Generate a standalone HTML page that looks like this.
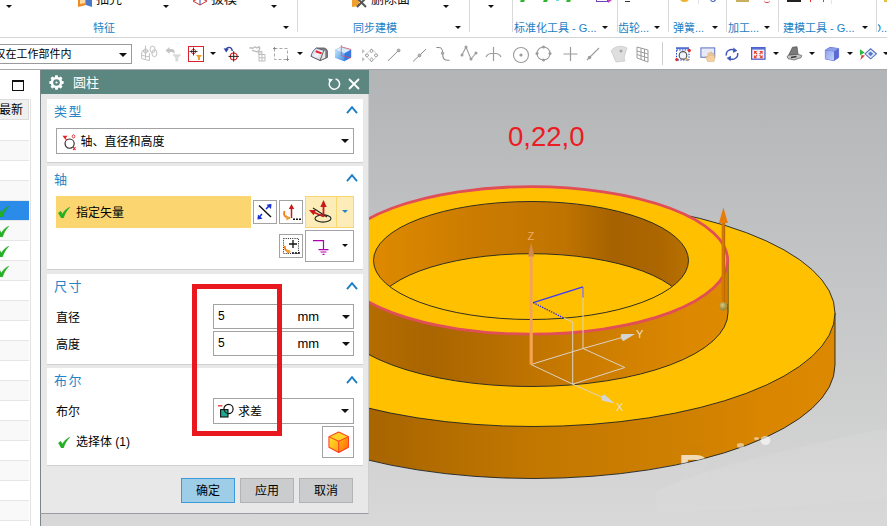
<!DOCTYPE html>
<html lang="zh-CN">
<head>
<meta charset="utf-8">
<title>圆柱</title>
<style>
html,body{margin:0;padding:0;}
body{width:887px;height:526px;overflow:hidden;position:relative;background:#fff;
  font-family:"Liberation Sans","Noto Sans CJK SC",sans-serif;font-size:12px;color:#000;}
.abs{position:absolute;}
#viewport{position:absolute;left:0;top:69px;width:887px;height:457px;
  background:linear-gradient(#b3b4b6 0%,#c4c5c6 45%,#d8d8d8 100%);}
#scene{position:absolute;left:0;top:0;}
/* ribbon */
#ribbon{position:absolute;left:0;top:0;width:887px;height:37px;background:#fff;border-bottom:1px solid #d4d4d4;}
#ribbon .grp{position:absolute;top:20.5px;font-size:11px;color:#1c7ec4;white-space:nowrap;line-height:15px;}
#ribbon .sep{position:absolute;top:0;width:1px;height:32px;background:#d9d9d9;}
.tri.big{border-left-width:4px;border-right-width:4px;border-top-width:4.5px}
.tri{position:absolute;width:0;height:0;border-left:3px solid transparent;border-right:3px solid transparent;border-top:3.3px solid #111;}
#ribbon .cut{position:absolute;top:-9px;font-size:13px;color:#111;white-space:nowrap;line-height:15px;}
/* toolbar */
#toolbar{position:absolute;left:0;top:38px;width:887px;height:31px;background:#fff;}
#filter{position:absolute;left:-8px;top:6px;width:138px;height:18px;border:1px solid #9a9a9a;background:#fff;font-size:11px;line-height:18px;white-space:nowrap;}
/* left panel */
#left{overflow:hidden;position:absolute;left:0;top:69px;width:41px;height:457px;background:#fff;box-sizing:border-box;}
#left .row{position:absolute;left:0;width:29px;height:19px;border-bottom:1px solid #e6e6e6;}
/* dialog */
#dlg{position:absolute;left:40px;top:69px;width:329px;height:445px;background:#e8e8e8;border-left:1px solid #7c848a;border-bottom:1px solid #9a9ea2;border-right:1px solid #cfcfcf;box-sizing:border-box;}
#dlg .title{position:absolute;left:0;top:0;width:328px;height:25px;background:#5b8780;color:#fff;}
.panel{position:absolute;left:6px;width:316px;background:#fff;border-bottom:1px solid #d0d0d0;}
.hd{position:absolute;left:7px;font-size:13px;letter-spacing:1.5px;color:#2484c6;line-height:16px;white-space:nowrap;}
.lb{position:absolute;font-size:12px;line-height:15px;white-space:nowrap;color:#000;}
.box{position:absolute;box-sizing:border-box;border:1px solid #a3a3a3;background:#fff;}
.btn{position:absolute;box-sizing:border-box;border:1px solid #b2b3b5;background:#cbccce;font-size:12px;line-height:25px;text-align:center;}
</style>
</head>
<body>

<div id="viewport">
<div class="abs" style="left:0;top:0;width:887px;height:1px;background:#a6a7a9;z-index:1"></div>
<svg id="scene" width="887" height="457" viewBox="0 69 887 457">
<defs>
  <linearGradient id="gOuter" x1="231" x2="835" y1="0" y2="0" gradientUnits="userSpaceOnUse">
    <stop offset="0" stop-color="#9a5c00"/>
    <stop offset="0.25" stop-color="#a96600"/>
    <stop offset="0.5" stop-color="#c27700"/>
    <stop offset="0.72" stop-color="#cd7f00"/>
    <stop offset="0.9" stop-color="#da8600"/>
    <stop offset="1" stop-color="#dc8800"/>
  </linearGradient>
  <linearGradient id="gRing" x1="334" x2="728" y1="0" y2="0" gradientUnits="userSpaceOnUse">
    <stop offset="0" stop-color="#c07400"/>
    <stop offset="0.1" stop-color="#b46c00"/>
    <stop offset="0.24" stop-color="#a96500"/>
    <stop offset="0.36" stop-color="#b26b00"/>
    <stop offset="0.6" stop-color="#c87a00"/>
    <stop offset="0.9" stop-color="#dc8800"/>
    <stop offset="1" stop-color="#de8a00"/>
  </linearGradient>
  <linearGradient id="gHole" x1="373" x2="689" y1="0" y2="0" gradientUnits="userSpaceOnUse">
    <stop offset="0" stop-color="#de8a00"/>
    <stop offset="0.3" stop-color="#cc7c00"/>
    <stop offset="0.6" stop-color="#c07400"/>
    <stop offset="0.76" stop-color="#a66200"/>
    <stop offset="0.9" stop-color="#ac6600"/>
    <stop offset="1" stop-color="#b87000"/>
  </linearGradient>
</defs>
<!-- outer disc side -->
<path d="M231,313 L231,365 A302,113.5 0 0 0 835,365 L835,313 Z" fill="url(#gOuter)" stroke="#1e2226" stroke-width="0.9"/>
<!-- outer disc top -->
<ellipse cx="533" cy="313" rx="302" ry="113.5" fill="#ffc000" stroke="#1e2226" stroke-width="0.9"/>
<!-- ring side -->
<path d="M334,260.4 L334,312.6 A197,73.9 0 0 0 728,312.6 L728,260.4 Z" fill="url(#gRing)" stroke="#1e2226" stroke-width="0.9"/>
<path d="M726.4,262 V304" stroke="#d67c00" stroke-width="2.8"/>
<!-- ring top -->
<ellipse cx="531" cy="260.4" rx="196.7" ry="73.8" fill="#ffc000" stroke="#e04e58" stroke-width="2.8"/>
<!-- hole -->
<clipPath id="cHole"><ellipse cx="531" cy="260.5" rx="157.5" ry="59"/></clipPath>
<ellipse cx="531" cy="260.5" rx="157.5" ry="59" fill="url(#gHole)"/>
<ellipse cx="531" cy="312.7" rx="157.5" ry="59" fill="#ffc000" stroke="#1e2226" stroke-width="0.9" clip-path="url(#cHole)"/>
<ellipse cx="531" cy="260.5" rx="157.5" ry="59" fill="none" stroke="#1e2226" stroke-width="0.9"/>

<!-- WCS cube -->
<g fill="none" stroke="#dcd2c4" stroke-width="1">
<path d="M531,364.5 L572.7,384.2 L624.8,367.5 L583,348.5 Z"/>
<path d="M572.7,384.2 V322 L564,318.2"/>
<path d="M583,348.5 V287.7"/>
<path d="M572.7,384.2 L606,399"/>
<path d="M583,348.5 L622,337.5"/>
</g>
<path d="M533.2,302.6 L583,286.9" stroke="#3838ff" stroke-width="1.2" fill="none"/><path d="M583,286.9 V297.5" stroke="#6a5cf0" stroke-width="1.1" fill="none"/>
<path d="M533.2,302.6 L564,318.2" stroke="#2020ff" stroke-width="1.3" stroke-dasharray="1.4 1.1" fill="none"/>
<!-- X arrow -->
<path d="M604.5,394.5 L614.5,403.5 L602,400.5 C600.5,398 602,395 604.5,394.5Z" fill="#d4d4d4"/>
<text x="616" y="411" font-size="11" fill="#e8e0d0" font-family="Liberation Sans, sans-serif">X</text>
<!-- Y arrow -->
<path d="M621.5,334 L635,334 L623.5,341 C621,340 620,336 621.5,334Z" fill="#d4d4d4"/>
<text x="636" y="338" font-size="11" fill="#e8e0d0" font-family="Liberation Sans, sans-serif">Y</text>
<!-- Z axis -->
<path d="M531.2,364.5 V333" stroke="#f7a24c" stroke-width="3.2"/>
<path d="M531.2,333 V255" stroke="#f2a25a" stroke-width="2.7"/>
<path d="M528,256.6 L531.2,242.6 L534.4,256.6Z" fill="#d08a50"/>
<text x="527.5" y="240" font-size="11" fill="#f0a868" font-family="Liberation Sans, sans-serif">Z</text>
<!-- vector arrow -->
<path d="M723.3,305 V222" stroke="#d27800" stroke-width="3.4"/>
<path d="M724.7,305 V222" stroke="#b86600" stroke-width="0.9"/>
<path d="M718.9,223 L723.4,207.6 L727.9,223Z" fill="#e87c08"/>
<radialGradient id="gBall" cx="0.42" cy="0.36" r="0.7"><stop offset="0" stop-color="#dccc80"/><stop offset="0.45" stop-color="#b4a050"/><stop offset="1" stop-color="#8c7c34"/></radialGradient>
<circle cx="723.2" cy="306.3" r="4.2" fill="url(#gBall)"/>
<!-- coordinate text -->
<text x="508" y="145.8" font-size="27.5" fill="#ea1c24" font-family="Liberation Sans, sans-serif">0,22,0</text>
<!-- watermark hints -->
<clipPath id="cSide"><path d="M231,313 L231,365 A302,113.5 0 0 0 835,365 L835,313 Z"/></clipPath>
<text x="678.5" y="485.7" font-size="44" font-weight="bold" fill="#fff" opacity="0.7" clip-path="url(#cSide)" font-family="Liberation Sans, sans-serif">B</text>
<text x="678.5" y="485.7" font-size="44" font-weight="bold" fill="#fff" opacity="0.04" font-family="Liberation Sans, sans-serif">B</text>
<g fill="#ffffff">
<ellipse cx="740.5" cy="445.5" rx="3.6" ry="2.4" opacity="0.5"/>
<ellipse cx="756.5" cy="438.5" rx="2.6" ry="1.6" opacity="0.5"/>
<ellipse cx="765.5" cy="440.5" rx="5" ry="4.6" opacity="0.6"/>
<path d="M655,492 C700,470 760,455 887,428 V500 C800,505 720,512 657,512Z" opacity="0.07"/>
</g>
</svg>
</div>

<div id="ribbon">
<!-- cut-off top row -->
<div class="tri" style="left:6px;top:5px"></div>
<svg class="abs" style="left:77px;top:-8px" width="16" height="16" viewBox="0 0 16 16"><path d="M1,3 L9,1 L9,13 L1,15Z" fill="#f08a24"/><path d="M9,1 L15,3 L15,15 L9,13Z" fill="#4a78c8"/><path d="M3,5 L8,4 L8,11 L3,12Z" fill="#ffd9a0"/></svg>
<div class="cut" style="left:96px">抽壳</div>
<div class="tri" style="left:163px;top:5px"></div>
<svg class="abs" style="left:192px;top:-10px" width="16" height="16" viewBox="0 0 16 16"><path d="M1,11 L8,8 L15,11 L8,15Z" fill="none" stroke="#d03030" stroke-width="1"/><path d="M8,2 L8,15" stroke="#3050c0" stroke-width="1"/></svg>
<div class="cut" style="left:211px">拔模</div>
<div class="tri" style="left:271px;top:5px"></div>
<div class="sep" style="left:297px"></div>
<svg class="abs" style="left:351px;top:-8px" width="17" height="16" viewBox="0 0 17 16"><path d="M1,4 L8,2 L8,14 L1,15Z" fill="#f0a030"/><path d="M6,6 L15,15 M15,6 L6,15" stroke="#555" stroke-width="2"/></svg>
<div class="cut" style="left:371px">删除面</div>
<div class="tri" style="left:443px;top:5px"></div>
<div class="sep" style="left:469px"></div>
<div class="tri" style="left:488px;top:5px"></div>
<div class="sep" style="left:512px"></div>
<div class="abs" style="left:521px;top:-3px;width:4px;height:5px;background:#2fb52f;transform:skewX(-20deg)"></div>
<div class="abs" style="left:544px;top:-3px;width:4px;height:5px;background:#2fb52f;transform:skewX(-20deg)"></div>
<div class="abs" style="left:556px;top:-3px;width:3px;height:4px;background:#6fd8d8"></div>
<div class="abs" style="left:567px;top:-3px;width:4px;height:5px;background:#2fb52f;transform:skewX(-20deg)"></div>
<div class="abs" style="left:596px;top:-2px;width:12px;height:4px;border:1.5px solid #7040c0;border-top:0;box-sizing:border-box"></div>
<div class="abs" style="left:608px;top:0;width:0;height:0;border-left:4px solid #c040c0;border-top:3px solid transparent;border-bottom:3px solid transparent;margin-top:-3px"></div>
<div class="sep" style="left:617px"></div>
<div class="abs" style="left:625px;top:1px;width:5px;height:1px;background:#333"></div>
<div class="sep" style="left:668px"></div>
<div class="abs" style="left:680px;top:-2px;width:9px;height:4px;background:#f0b030;border-radius:0 0 4px 4px"></div>
<div class="sep" style="left:698px;background:#e4e4e4;height:4px"></div>
<div class="abs" style="left:710px;top:-2px;width:6px;height:4px;border:1px solid #4060c0;border-top:0;border-radius:0 0 4px 4px;box-sizing:border-box"></div>
<div class="sep" style="left:726px"></div>
<div class="abs" style="left:736px;top:0;width:13px;height:2px;background:#c8b060"></div>
<div class="abs" style="left:764px;top:0;width:6px;height:3px;border-bottom:1.5px solid #e03030;border-radius:0 0 5px 5px;box-sizing:border-box"></div>
<div class="sep" style="left:778px"></div>
<div class="abs" style="left:787px;top:0;width:14px;height:2px;background:#222"></div>
<div class="abs" style="left:810px;top:0;width:1px;height:2px;background:#e03030"></div>
<div class="abs" style="left:823px;top:0;width:1px;height:2px;background:#e03030"></div>
<div class="sep" style="left:831px;background:#e4e4e4;height:4px"></div>
<div class="abs" style="left:840px;top:-7px;font-size:8px;line-height:9px;color:#333">mm</div>
<div class="sep" style="left:876px"></div>
<div class="abs" style="left:884px;top:0;width:3px;height:2px;background:#e8c040"></div>
<!-- group labels -->
<div class="grp" style="left:93px">特征</div>
<div class="tri" style="left:283.3px;top:26px"></div>
<div class="grp" style="left:353px">同步建模</div>
<div class="tri" style="left:455.3px;top:26px"></div>
<div class="grp" style="left:514px">标准化工具 - G...</div>
<div class="tri" style="left:602.3px;top:26px"></div>
<div class="grp" style="left:618px">齿轮...</div>
<div class="tri" style="left:654.3px;top:26px"></div>
<div class="grp" style="left:673px">弹簧...</div>
<div class="tri" style="left:712.3px;top:26px"></div>
<div class="grp" style="left:728px">加工...</div>
<div class="tri" style="left:764.3px;top:26px"></div>
<div class="grp" style="left:783px">建模工具 - G...</div>
<div class="tri" style="left:862.3px;top:26px"></div>
<div class="grp" style="left:877.5px;width:10px;overflow:hidden"><span style="margin-left:-4.5px">D...</span></div>
</div>
<div id="toolbar">
<div id="filter"><span style="position:absolute;left:1.5px;top:0">仅在工作部件内</span><div class="tri" style="left:126px;top:8px;border-left-width:4px;border-right-width:4px;border-top-width:4.5px"></div></div>
<!-- 1 grey part/assembly -->
<svg class="abs" style="left:140px;top:7px" width="18" height="17" viewBox="140 45 18 17" fill="none" stroke="#c2c2c2" stroke-width="1"><path d="M145.5,45.5 V55 M141.5,51 H149"/><circle cx="145.5" cy="51" r="2.1"/><path d="M141.7,52 V58.6 L149.4,60.6 V53.2 M141.7,55.2 L149.4,57 M145.5,55 V59.6"/><ellipse cx="152.6" cy="49.4" rx="2.5" ry="3.3"/><ellipse cx="154.4" cy="53.2" rx="2.5" ry="3.5"/></svg>
<!-- 2 grey arrow funnel -->
<svg class="abs" style="left:164px;top:7px" width="18" height="17" viewBox="164 45 18 17" fill="none"><path d="M165.5,50.5 L169.5,47 V49.2 C173,48.5 175.5,50 174.5,54 C174,52.3 172,51.8 169.5,52 V54Z" fill="#c4c4c4"/><path d="M173,54.8 H180.6 L177.8,57.8 V61 H175.8 V57.8Z" fill="#dcdcdc" stroke="#cfcfcf" stroke-width="0.6"/></svg>
<!-- 3 red bordered -->
<svg class="abs" style="left:188px;top:8px" width="16" height="16" viewBox="0 0 16 16" fill="none"><rect x="0.5" y="0.5" width="15" height="15" stroke="#d8232a" fill="#fff"/><circle cx="5.5" cy="5.5" r="2.2" stroke="#c03030" stroke-width="0.9"/><path d="M5.5,1.5 V9.5 M1.5,5.5 H9.5" stroke="#222" stroke-width="0.9"/><path d="M8,9 H14 L12,11.5 V14 H10 V11.5Z" fill="#f0a020"/></svg>
<div class="tri" style="left:210px;top:14px"></div>
<!-- 5 undo crosshair -->
<svg class="abs" style="left:223px;top:7px" width="17" height="18" viewBox="223 45 17 18" fill="none"><path d="M226,50.5 C226.5,46.5 231.5,46 232.3,51" stroke="#3344a8" stroke-width="1.4"/><path d="M223.6,48.2 L226.2,52.4 L228.8,48.8Z" fill="#3344a8"/><circle cx="233.7" cy="56.4" r="3.4" stroke="#e02020" stroke-width="1.1"/><path d="M233.7,51.2 V61.6 M228.5,56.4 H238.9" stroke="#222" stroke-width="1"/></svg>
<!-- 6 grey -->
<svg class="abs" style="left:248px;top:7px" width="19" height="17" viewBox="248 45 19 17" fill="none" stroke="#bebebe" stroke-width="1"><path d="M249.5,48.5 C251,46 252.5,50 254,47.5 C255.5,45.5 256.5,49.5 258.5,47 C260,46 260.5,50 258,51.5 C256,52.5 254,50 252,50.5" stroke-width="1.4"/><rect x="258.7" y="51.4" width="3.2" height="3" fill="#e4e4e4"/><path d="M259,54.5 H265 V61 H259Z M262,54.5 V61 M259,57.8 H265"/></svg>
<!-- 7 dashed rect -->
<svg class="abs" style="left:273px;top:8px" width="18" height="16" viewBox="0 0 18 16" fill="none" stroke="#a9a9a9" stroke-width="1"><rect x="1.5" y="2.5" width="13" height="11" stroke-dasharray="3 2"/><path d="M1.5,1 V4 M0,2.5 H3 M14.5,12 V15 M13,13.5 H16" stroke="#8a8a8a"/></svg>
<div class="tri" style="left:296.8px;top:14px"></div>
<!-- 9 eraser-like -->
<svg class="abs" style="left:310px;top:7px" width="19" height="17" viewBox="310 45 19 17" fill="none"><defs><linearGradient id="er1" x1="0" y1="0" x2="1" y2="1"><stop offset="0" stop-color="#b8c4e4"/><stop offset="0.5" stop-color="#f4f4f8"/><stop offset="1" stop-color="#c8c8cc"/></linearGradient></defs><path d="M316.4,48 L324,48 C326.5,48.3 327.4,50 327.4,52 V57.5 L320.2,60.5 L311,56.2 Z" fill="#8a8a8a" stroke="#4a4a4a" stroke-width="0.8"/><path d="M316.4,48 L323.9,50.5 L320.2,60.5 L311,56.2 C312,52 314,49.5 316.4,48Z" fill="url(#er1)" stroke="#4a5070" stroke-width="0.8"/><path d="M323.9,50.5 L325.8,49.6 V58 L320.2,60.5Z" fill="#e8e8e8" stroke="#4a4a4a" stroke-width="0.6"/><path d="M315.8,51.2 L321.6,53.4" stroke="#e82028" stroke-width="2"/></svg>
<!-- 10 blue cube -->
<svg class="abs" style="left:334px;top:6px" width="19" height="18" viewBox="334 44 19 18"><defs><linearGradient id="bc1" x1="0" y1="0" x2="1" y2="1"><stop offset="0" stop-color="#c4e6fc"/><stop offset="1" stop-color="#3c8ee6"/></linearGradient></defs><path d="M335,50 L341.5,46.5 L351.2,49.5 V57.5 L344.5,61.3 L335,57.5Z" fill="#3a78e0"/><path d="M335,50 L344.5,53.2 V61.3 L335,57.5Z" fill="url(#bc1)"/><path d="M335,50 L341.5,46.5 L351.2,49.5 L344.5,53.2Z" fill="#d4ecfc"/><path d="M341.3,45 V55.6 L351,58 M341.3,47 L351.2,49.5" stroke="#e84848" stroke-width="0.7" fill="none"/></svg>
<!-- 11 diamond pattern -->
<svg class="abs" style="left:361px;top:8px" width="18" height="17" viewBox="361 46 18 17" fill="none" stroke="#b0b0b0" stroke-width="0.9"><path d="M371.5,49 L378,55.3 L371.5,61.8 L365,55.3Z" stroke="#c4c4c4"/><path d="M371.5,49 L373,51 L371.5,53 L370,51Z M371.5,57.6 L373,59.6 L371.5,61.8 L370,59.6Z M365,55.3 L367,53.8 L369,55.3 L367,56.8Z M374,55.3 L376,53.8 L378,55.3 L376,56.8Z" stroke="#9a9a9a"/><path d="M362,49 L365,51.3 L362,53.6Z M362,57 L365,59.3 L362,61.6Z" fill="#c0c0c0" stroke="none"/></svg>
<!-- 12 line endpoint -->
<svg class="abs" style="left:386px;top:8px" width="16" height="17" viewBox="386 46 16 17" fill="none" stroke="#8c8c8c" stroke-width="1"><path d="M388,60.8 L398,51"/><circle cx="398.6" cy="50.4" r="1.5" fill="#b0b0b0" stroke="#8c8c8c" stroke-width="0.6"/></svg>
<!-- 13 line midpoint -->
<svg class="abs" style="left:411px;top:8px" width="17" height="17" viewBox="411 46 17 17" fill="none" stroke="#8c8c8c" stroke-width="1"><path d="M413,61.5 L426,49.2"/><circle cx="419.5" cy="55.4" r="1.5" fill="#b0b0b0" stroke="#8c8c8c" stroke-width="0.6"/></svg>
<!-- 14 curve -->
<svg class="abs" style="left:435px;top:8px" width="16" height="17" viewBox="435 46 16 17" fill="none" stroke="#8c8c8c" stroke-width="1.1"><path d="M436.4,47.5 H438.5 C443,47.5 442.5,51 442.6,53.5 C442.8,57 443,60.3 447.5,60.3 H449.5"/><circle cx="442.6" cy="53.2" r="1.3" fill="#b0b0b0" stroke="#8c8c8c" stroke-width="0.6"/></svg>
<!-- 15 polyline nodes -->
<svg class="abs" style="left:460px;top:7px" width="18" height="17" viewBox="0 0 18 17" fill="none" stroke="#9c9c9c" stroke-width="1.1"><path d="M2,10 L6,2 L11,14 L16,8"/><circle cx="6" cy="2" r="1.5" fill="#9c9c9c" stroke="none"/><circle cx="2" cy="10" r="1.5" fill="#9c9c9c" stroke="none"/><circle cx="11" cy="14" r="1.5" fill="#9c9c9c" stroke="none"/><circle cx="16" cy="8" r="1.5" fill="#9c9c9c" stroke="none"/></svg>
<!-- 16 arc with vertical -->
<svg class="abs" style="left:485px;top:8px" width="17" height="16" viewBox="0 0 17 16" fill="none" stroke="#9c9c9c" stroke-width="1.2"><path d="M8.5,1 V15 M1,11 C3,6 14,6 16,11"/></svg>
<!-- 17 circle center -->
<svg class="abs" style="left:511.5px;top:7.5px" width="18" height="18" viewBox="0 0 18 18" fill="none" stroke="#9c9c9c" stroke-width="1.1"><circle cx="9" cy="9" r="7.5"/><circle cx="9" cy="9" r="1.6" fill="#9c9c9c" stroke="none"/></svg>
<!-- 18 circle quadrant -->
<svg class="abs" style="left:535px;top:7px" width="17" height="17" viewBox="0 0 17 17" fill="none" stroke="#9c9c9c" stroke-width="1.1"><circle cx="8.5" cy="8.5" r="6.5"/><g fill="#9c9c9c" stroke="none"><circle cx="8.5" cy="2" r="1.5"/><circle cx="8.5" cy="15" r="1.5"/><circle cx="2" cy="8.5" r="1.5"/><circle cx="15" cy="8.5" r="1.5"/></g></svg>
<!-- 19 plus -->
<svg class="abs" style="left:563px;top:9px" width="15" height="15" viewBox="0 0 15 15" fill="none" stroke="#9c9c9c" stroke-width="1.2"><path d="M7.5,0 V14 M0.5,7 H14.5"/></svg>
<!-- 20 line with point -->
<svg class="abs" style="left:585px;top:8px" width="16" height="16" viewBox="0 0 16 16" fill="none" stroke="#9c9c9c" stroke-width="1.1"><path d="M2,14 L14,2"/><circle cx="4.5" cy="11.5" r="1.7" fill="#9c9c9c" stroke="none"/></svg>
<!-- 21 surface -->
<svg class="abs" style="left:610px;top:7px" width="18" height="18" viewBox="0 0 18 18" fill="none"><path d="M1,6 C4,1 12,0 17,3 L15,9 C14,12 14,14 15,16 L6,17 C4,13 3,9 1,6Z" fill="#dedede" stroke="#cacaca" stroke-width="0.8"/><circle cx="11" cy="6" r="1.5" fill="#a4a4a4"/></svg>
<!-- 22 grid -->
<svg class="abs" style="left:636px;top:8px" width="14" height="17" viewBox="0 0 14 17" fill="none" stroke="#9c9c9c" stroke-width="1"><path d="M1,1 L12,4 V16 L1,12Z M5,2 V13.5 M8.5,3 V15 M1,5 L12,8 M1,8.5 L12,12"/></svg>
<div class="abs" style="left:662px;top:4px;width:1px;height:23px;background:#cfcfcf"></div>
<!-- zoom -->
<svg class="abs" style="left:675px;top:9px" width="17" height="16" viewBox="0 0 17 16" fill="none"><path d="M1,1.2 H14" stroke="#5070d0" stroke-width="2"/><rect x="1.5" y="3" width="12.5" height="10" stroke="#2040d0" stroke-dasharray="1.5 1.2" stroke-width="1"/><circle cx="8" cy="8.4" r="3.8" stroke="#555" stroke-width="1.2" fill="#f0f4ff"/><path d="M10.8,11.2 L13.4,13.8" stroke="#c8a050" stroke-width="1.8"/><circle cx="14.3" cy="3.4" r="1.6" fill="#e03030"/><circle cx="1.8" cy="12.6" r="1.6" fill="#e03030"/></svg>
<!-- pan -->
<svg class="abs" style="left:700px;top:9px" width="17" height="16" viewBox="0 0 17 16" fill="none"><rect x="0.9" y="0.9" width="13.8" height="9.4" fill="#e6eaf6" stroke="#6a7cc8" stroke-width="1.1"/><path d="M7.6,14.6 C6.6,12 5.4,10 6.6,9 L8,10 V6 H9.3 V8.5 H10.2 V5 H11.6 V8.5 H12.4 V6 H13.7 V9 L14.6,8 V12 C14.6,13.5 14.2,14 13.8,14.6Z" fill="#f4d0a0" stroke="#d0a870" stroke-width="0.5"/></svg>
<!-- rotate -->
<svg class="abs" style="left:724px;top:9px" width="16" height="15" viewBox="0 0 16 15" fill="none" stroke="#4058b8" stroke-width="1.4"><path d="M2.3,8.6 C1.6,4 6,1.4 10.6,3"/><path d="M13.7,6 C14.4,10.6 10,13.4 5.4,11.8"/><path d="M9.4,0.6 L13.4,3.8 L9,6Z M6.6,14.2 L2.6,11 L7,8.8Z" fill="#4058b8" stroke="none"/></svg>
<!-- fit -->
<svg class="abs" style="left:751px;top:9px" width="15" height="13" viewBox="0 0 15 13" fill="none"><rect x="0.6" y="0.6" width="13.4" height="11.6" fill="#ececf8" stroke="#4858d0" stroke-width="1.2"/><path d="M0.6,1.6 H14" stroke="#5870d0" stroke-width="2"/><path d="M3,4 H6.2 L5,5.2 L6.4,6.6 L5.6,7.4 L4.2,6 L3,7.2Z M11.6,4 H8.4 L9.6,5.2 L8.2,6.6 L9,7.4 L10.4,6 L11.6,7.2Z M3,11.2 H6.2 L5,10 L6.4,8.6 L5.6,7.8 L4.2,9.2 L3,8Z M11.6,11.2 H8.4 L9.6,10 L8.2,8.6 L9,7.8 L10.4,9.2 L11.6,8Z" fill="#f04028"/></svg>
<div class="tri" style="left:773px;top:14px"></div>
<!-- grey 3d -->
<svg class="abs" style="left:786px;top:8px" width="17" height="15" viewBox="786 46 17 15" fill="none"><path d="M792.5,47.2 L797,46.8 L798,54.5 L788.5,55.5 Z" fill="#7a7a7a" stroke="#4c4c4c" stroke-width="0.7"/><path d="M787,56.5 L788.5,55.2 L798,54.2 L801.8,55.6 L801,57.6 L794,60 L788,58.6Z" fill="#c4c4c4" stroke="#555" stroke-width="0.7"/><path d="M791,57.4 L796.5,56.6" stroke="#333" stroke-width="1.5"/></svg>
<div class="tri" style="left:809.4px;top:14px"></div>
<!-- blue cube -->
<svg class="abs" style="left:824px;top:8px" width="16" height="16" viewBox="824 46 16 16"><defs><linearGradient id="bc2" x1="0" y1="0" x2="1" y2="1"><stop offset="0" stop-color="#8fa4ee"/><stop offset="1" stop-color="#c4d0f8"/></linearGradient></defs><path d="M825.4,50 L830,47.4 L838.6,48.6 V57.6 L834,60.6 L825.4,59Z" fill="#5a6ad0" stroke="#5868d4" stroke-width="0.9" stroke-linejoin="round"/><path d="M825.4,50.2 L834,51.4 V60.6 L825.4,59Z" fill="url(#bc2)"/><path d="M825.4,50 L830,47.4 L838.6,48.6 L834,51.4Z" fill="#8c9ce8"/></svg>
<div class="tri" style="left:847.4px;top:14px"></div>
<!-- colored -->
<svg class="abs" style="left:859px;top:8px" width="18" height="15" viewBox="859 46 18 15"><path d="M860,49.3 L864.6,52.6 L860,55.6Z" fill="#30b840"/><path d="M860.4,60 L865,55.6 L861.6,55Z" fill="#d84040"/><path d="M865,53.8 L870.6,48.8 L876.4,53.8 L870.6,58.8Z" fill="#e8ecf8" stroke="#5070c0" stroke-width="1.1"/><path d="M868,53.8 L870.6,51.4 L873.2,53.8 L870.6,56.2Z" fill="#5878c8"/></svg>
<div class="tri" style="left:883px;top:14px"></div>
</div>
<div id="left">
<div class="abs" style="left:0;top:0;width:40px;height:1px;background:#b9b9b9"></div>
<div class="abs" style="left:30px;top:30px;width:1px;height:430px;background:#e2e2e2"></div>
<div class="abs" style="left:40px;top:0;width:1px;height:457px;background:#7c848a"></div>
<div class="abs" style="left:12px;top:11px;width:12px;height:11px;box-sizing:border-box;border:1px solid #111;border-top-width:2.5px"></div>
<div class="abs" style="left:0;top:30px;width:29px;height:21px;box-sizing:border-box;background:#f0f0f0;border:1px solid #dcdcdc;border-left:0;font-size:12px;line-height:20px;white-space:nowrap"><span style="position:absolute;left:-1px;top:0">最新</span></div>
<div class="row" style="top:52px;background:#fff"></div><div class="row" style="top:72px;background:#f9f9f9"></div><div class="row" style="top:92px;background:#fff"></div><div class="row" style="top:112px;background:#f9f9f9"></div><div class="row" style="top:132px;background:#2b8be8"></div><div class="row" style="top:152px;background:#f9f9f9"></div><div class="row" style="top:172px;background:#fff"></div><div class="row" style="top:192px;background:#f9f9f9"></div><div class="row" style="top:212px;background:#fff"></div><div class="row" style="top:232px;background:#f9f9f9"></div><div class="row" style="top:252px;background:#fff"></div><div class="row" style="top:272px;background:#f9f9f9"></div><div class="row" style="top:292px;background:#fff"></div><div class="row" style="top:312px;background:#f9f9f9"></div><div class="row" style="top:332px;background:#fff"></div><div class="row" style="top:352px;background:#f9f9f9"></div><div class="row" style="top:372px;background:#fff"></div><div class="row" style="top:392px;background:#f9f9f9"></div><div class="row" style="top:412px;background:#fff"></div><div class="row" style="top:432px;background:#f9f9f9"></div><div class="row" style="top:452px;background:#fff"></div>
<svg class="abs" style="left:-3.4px;top:136.5px" width="12.2" height="11.4" viewBox="0 0 14 12" preserveAspectRatio="none"><path d="M0.5,6.2 L3.2,4.6 L5,7.6 C7,4 10,1.5 13.6,0.2 C10,3.6 7.6,7.4 6.2,11.6 L4,11.8 Z" fill="#22b322" stroke="#1a9c1a" stroke-width="0.5"/></svg><svg class="abs" style="left:-3.4px;top:156.5px" width="12.2" height="11.4" viewBox="0 0 14 12" preserveAspectRatio="none"><path d="M0.5,6.2 L3.2,4.6 L5,7.6 C7,4 10,1.5 13.6,0.2 C10,3.6 7.6,7.4 6.2,11.6 L4,11.8 Z" fill="#22b322" stroke="#1a9c1a" stroke-width="0.5"/></svg><svg class="abs" style="left:-3.4px;top:176.5px" width="12.2" height="11.4" viewBox="0 0 14 12" preserveAspectRatio="none"><path d="M0.5,6.2 L3.2,4.6 L5,7.6 C7,4 10,1.5 13.6,0.2 C10,3.6 7.6,7.4 6.2,11.6 L4,11.8 Z" fill="#22b322" stroke="#1a9c1a" stroke-width="0.5"/></svg><svg class="abs" style="left:-3.4px;top:196.5px" width="12.2" height="11.4" viewBox="0 0 14 12" preserveAspectRatio="none"><path d="M0.5,6.2 L3.2,4.6 L5,7.6 C7,4 10,1.5 13.6,0.2 C10,3.6 7.6,7.4 6.2,11.6 L4,11.8 Z" fill="#22b322" stroke="#1a9c1a" stroke-width="0.5"/></svg>
</div>
<div id="dlg">
<div class="title">
<svg class="abs" style="left:7.5px;top:6.4px" width="15" height="15" viewBox="-7.5 -7.5 15 15"><g fill="#fff"><circle r="5.7"/><g id="gt"><rect x="-1.5" y="-7.2" width="3" height="14.4" rx="0.7"/></g><use href="#gt" transform="rotate(45)"/><use href="#gt" transform="rotate(90)"/><use href="#gt" transform="rotate(135)"/></g><circle r="3.3" fill="#5b8780"/><circle r="1.1" fill="#fff"/></svg>
<div class="abs" style="left:32px;top:5.3px;font-size:13px;line-height:17px;color:#fff;white-space:nowrap">圆柱</div>
<svg class="abs" style="left:286px;top:8px" width="14" height="14" viewBox="0 0 14 14"><path d="M3.4,3.6 A5.2,5.2 0 1 0 8.6,1.9" fill="none" stroke="#fff" stroke-width="1.5"/><path d="M1.2,1.6 L6,2.2 L2.6,6Z" fill="#fff"/></svg>
<svg class="abs" style="left:306.5px;top:8.5px" width="12" height="12" viewBox="0 0 12 12"><path d="M1,1 L11,11 M11,1 L1,11" stroke="#fff" stroke-width="1.9"/></svg>
</div>

<!-- panel 1: type -->
<div class="panel" style="top:30px;height:63px">
<div class="hd" style="top:5px">类型</div>
<svg class="abs" style="left:299px;top:7px" width="12" height="8" viewBox="0 0 12 8"><path d="M1,7.2 L6,1.2 L11,7.2" fill="none" stroke="#1c7ec4" stroke-width="1.9"/></svg>
<div class="box" style="left:9px;top:29px;width:298px;height:26px">
<svg class="abs" style="left:5.4px;top:4.5px" width="15" height="17" viewBox="0 0 15 17" fill="none"><circle cx="7.6" cy="9.6" r="4.6" stroke="#222" stroke-width="1.1"/><path d="M0.5,1.8 H5.5 L3,5Z" fill="#e02020"/><path d="M3,4 L5,6.5 M11,13 L13.5,16 M11,16 L13.5,13" stroke="#e02020" stroke-width="1.1"/><path d="M11.5,0.8 a1.3,1.6 0 1 0 0.1,0Z" stroke="#e02020" stroke-width="0.9"/></svg>
<div class="lb" style="left:23.5px;top:6px">轴、直径和高度</div>
<div class="tri big" style="left:283.5px;top:9.5px"></div>
</div>
</div>

<!-- panel 2: axis -->
<div class="panel" style="top:97px;height:103px">
<div class="hd" style="top:6px">轴</div>
<svg class="abs" style="left:299px;top:8px" width="12" height="8" viewBox="0 0 12 8"><path d="M1,7.2 L6,1.2 L11,7.2" fill="none" stroke="#1c7ec4" stroke-width="1.9"/></svg>
<div class="abs" style="left:9px;top:30px;width:195px;height:32px;background:#fbd670"></div>
<svg class="abs" style="left:11.0px;top:40.9px" width="12.2" height="11.4" viewBox="0 0 14 12" preserveAspectRatio="none"><path d="M0.5,6.2 L3.2,4.6 L5,7.6 C7,4 10,1.5 13.6,0.2 C10,3.6 7.6,7.4 6.2,11.6 L4,11.8 Z" fill="#22b322" stroke="#1a9c1a" stroke-width="0.5"/></svg>
<div class="lb" style="left:29px;top:39.5px">指定矢量</div>
<div class="box" style="left:206px;top:34px;width:24px;height:24px">
<svg class="abs" style="left:3px;top:3px" width="16" height="16" viewBox="0 0 16 16"><path d="M2,1.5 L14,13" stroke="#111" stroke-width="1.4"/><path d="M13.5,0.5 L9,5 M5,10 L1,14.5" stroke="#1830d8" stroke-width="1.6"/><path d="M14.5,0 L14,5 L9.5,0.8Z M0.5,15.5 L1,10.5 L5.5,14.8Z" fill="#1830d8"/></svg>
</div>
<div class="box" style="left:232px;top:34px;width:24px;height:24px">
<svg class="abs" style="left:2px;top:2px" width="19" height="19" viewBox="0 0 19 19" fill="none"><path d="M9.5,4 V15" stroke="#c81818" stroke-width="1.5"/><path d="M6.8,6 L9.5,1 L12.2,6Z" fill="#c81818"/><path d="M2.5,8 C1,12 3,15 8,15" stroke="#f08020" stroke-width="2"/><path d="M4,12 L8.5,15.2 L4.5,17.5Z" fill="#f0a030"/><path d="M11,16.2 H13 M14,16.2 H16 M17,16.2 H19" stroke="#111" stroke-width="1.6"/></svg>
</div>
<div class="abs" style="left:258px;top:30px;width:49px;height:32px;box-sizing:border-box;background:#fcedb8;border:1px solid #fbd670"></div>
<div class="abs" style="left:289px;top:31px;width:1px;height:30px;background:#fbd670"></div>
<svg class="abs" style="left:261px;top:33px" width="26" height="26" viewBox="0 0 26 26" fill="none"><ellipse cx="15" cy="19.5" rx="8" ry="3.6" stroke="#222" stroke-width="1.1"/><path d="M5,9 L19,18" stroke="#222" stroke-width="1.1"/><path d="M15.5,18 V6" stroke="#c81818" stroke-width="1.8"/><path d="M12.3,8 L15.5,1 L18.7,8Z" fill="#c81818"/><path d="M15.5,17.5 L5,13" stroke="#c81818" stroke-width="1.6"/><path d="M1,11 L8,11 L5.6,16.2Z" fill="#c81818"/></svg>
<div class="tri" style="left:295px;top:44px;border-top-color:#2a82c8;border-left-width:3px;border-right-width:3px;border-top-width:3.5px"></div>
<div class="box" style="left:232px;top:68px;width:24px;height:24px">
<svg class="abs" style="left:2px;top:2px" width="19" height="19" viewBox="0 0 19 19" fill="none"><rect x="1.5" y="1.5" width="15" height="15" stroke="#222" stroke-width="1" stroke-dasharray="1 1.2"/><path d="M11,3 V11 M7,7 H15" stroke="#111" stroke-width="1.3"/><path d="M3,9 C2,12 4,14.5 8,14.5" stroke="#f08020" stroke-width="2"/><path d="M4.5,12 L9,15 L5,17Z" fill="#f0a030"/><path d="M10,16 H12 M13,16 H15 M16,16 H18" stroke="#111" stroke-width="1.6"/></svg>
</div>
<div class="box" style="left:258px;top:64px;width:49px;height:32px">
<svg class="abs" style="left:6px;top:8px" width="18" height="17" viewBox="0 0 18 17" fill="none" stroke="#b000b0" stroke-width="1.2"><path d="M1,1.6 H11.5 V10 M6.5,10.6 H16.5 M8.5,13 H14.5 M10.5,15.4 H12.5"/></svg>
<div class="tri" style="left:36.4px;top:13px"></div>
</div>
</div>

<!-- panel 3: size -->
<div class="panel" style="top:205px;height:90px">
<div class="hd" style="top:5px">尺寸</div>
<svg class="abs" style="left:299px;top:8px" width="12" height="8" viewBox="0 0 12 8"><path d="M1,7.2 L6,1.2 L11,7.2" fill="none" stroke="#1c7ec4" stroke-width="1.9"/></svg>
<div class="lb" style="left:9px;top:36.5px">直径</div>
<div class="lb" style="left:9px;top:63.5px">高度</div>
<div class="box" style="left:166px;top:30px;width:141px;height:25px">
<div class="lb" style="left:4px;top:4px">5</div><div class="lb" style="left:83.5px;top:4px;font-size:13px">mm</div><div class="tri big" style="left:127.5px;top:10px"></div></div>
<div class="box" style="left:166px;top:57px;width:141px;height:25px">
<div class="lb" style="left:4px;top:4px">5</div><div class="lb" style="left:83.5px;top:4px;font-size:13px">mm</div><div class="tri big" style="left:127.5px;top:10px"></div></div>
</div>

<!-- panel 4: boolean -->
<div class="panel" style="top:299px;height:97px">
<div class="hd" style="top:5px">布尔</div>
<svg class="abs" style="left:299px;top:8px" width="12" height="8" viewBox="0 0 12 8"><path d="M1,7.2 L6,1.2 L11,7.2" fill="none" stroke="#1c7ec4" stroke-width="1.9"/></svg>
<div class="lb" style="left:9px;top:37px">布尔</div>
<div class="box" style="left:166px;top:30px;width:141px;height:26px">
<svg class="abs" style="left:4px;top:4px" width="17" height="15" viewBox="0 0 17 15" fill="none"><path d="M0,2.8 H4.4" stroke="#e02020" stroke-width="1.2"/><circle cx="10.5" cy="6" r="4.6" stroke="#111" stroke-width="1.2" fill="#fff"/><rect x="2.6" y="6.6" width="7.4" height="7.4" fill="#1fa890" stroke="#111" stroke-width="1.1"/><path d="M6,6.6 A4.6,4.6 0 0 0 10,10.6" stroke="#111" stroke-width="1"/></svg>
<div class="lb" style="left:24px;top:5.5px">求差</div>
<div class="tri big" style="left:127px;top:9.7px"></div>
</div>
<svg class="abs" style="left:11.0px;top:68.9px" width="12.2" height="11.4" viewBox="0 0 14 12" preserveAspectRatio="none"><path d="M0.5,6.2 L3.2,4.6 L5,7.6 C7,4 10,1.5 13.6,0.2 C10,3.6 7.6,7.4 6.2,11.6 L4,11.8 Z" fill="#22b322" stroke="#1a9c1a" stroke-width="0.5"/></svg>
<div class="lb" style="left:29px;top:66.5px">选择体 (1)</div>
<div class="box" style="left:275px;top:58px;width:32px;height:32px">
<svg class="abs" style="left:4.8px;top:3.6px" width="21.4" height="22.4" viewBox="0 0 23 24"><defs><linearGradient id="cb1" x1="0" y1="0" x2="1" y2="1"><stop offset="0" stop-color="#ffe428"/><stop offset="1" stop-color="#ffa010"/></linearGradient><linearGradient id="cb2" x1="0" y1="0" x2="1" y2="1"><stop offset="0" stop-color="#ffb818"/><stop offset="1" stop-color="#ff6600"/></linearGradient></defs><path d="M1,6 L11.5,11 V23 L1,17.5Z" fill="url(#cb1)"/><path d="M11.5,11 L22,6 V17.5 L11.5,23Z" fill="url(#cb2)"/><path d="M11.5,1 L22,6 L11.5,11 L1,6Z" fill="#ffd428"/><path d="M11.5,1 L22,6 V17.5 L11.5,23 L1,17.5 V6Z M1,6 L11.5,11 L22,6 M11.5,11 V23" fill="none" stroke="#ff3a20" stroke-width="1.1" stroke-linejoin="round"/></svg>
</div>
</div>

<div class="btn" style="left:140px;top:409px;width:54px;height:25px;background:#9ecde8;border-color:#3c9ada">确定</div>
<div class="btn" style="left:199px;top:409px;width:54px;height:25px">应用</div>
<div class="btn" style="left:258px;top:409px;width:54px;height:25px">取消</div>
</div>

<!-- red annotation rectangle -->
<div class="abs" style="left:192px;top:284px;width:90px;height:152px;box-sizing:border-box;border:5px solid #e9181f"></div>

</body>
</html>
